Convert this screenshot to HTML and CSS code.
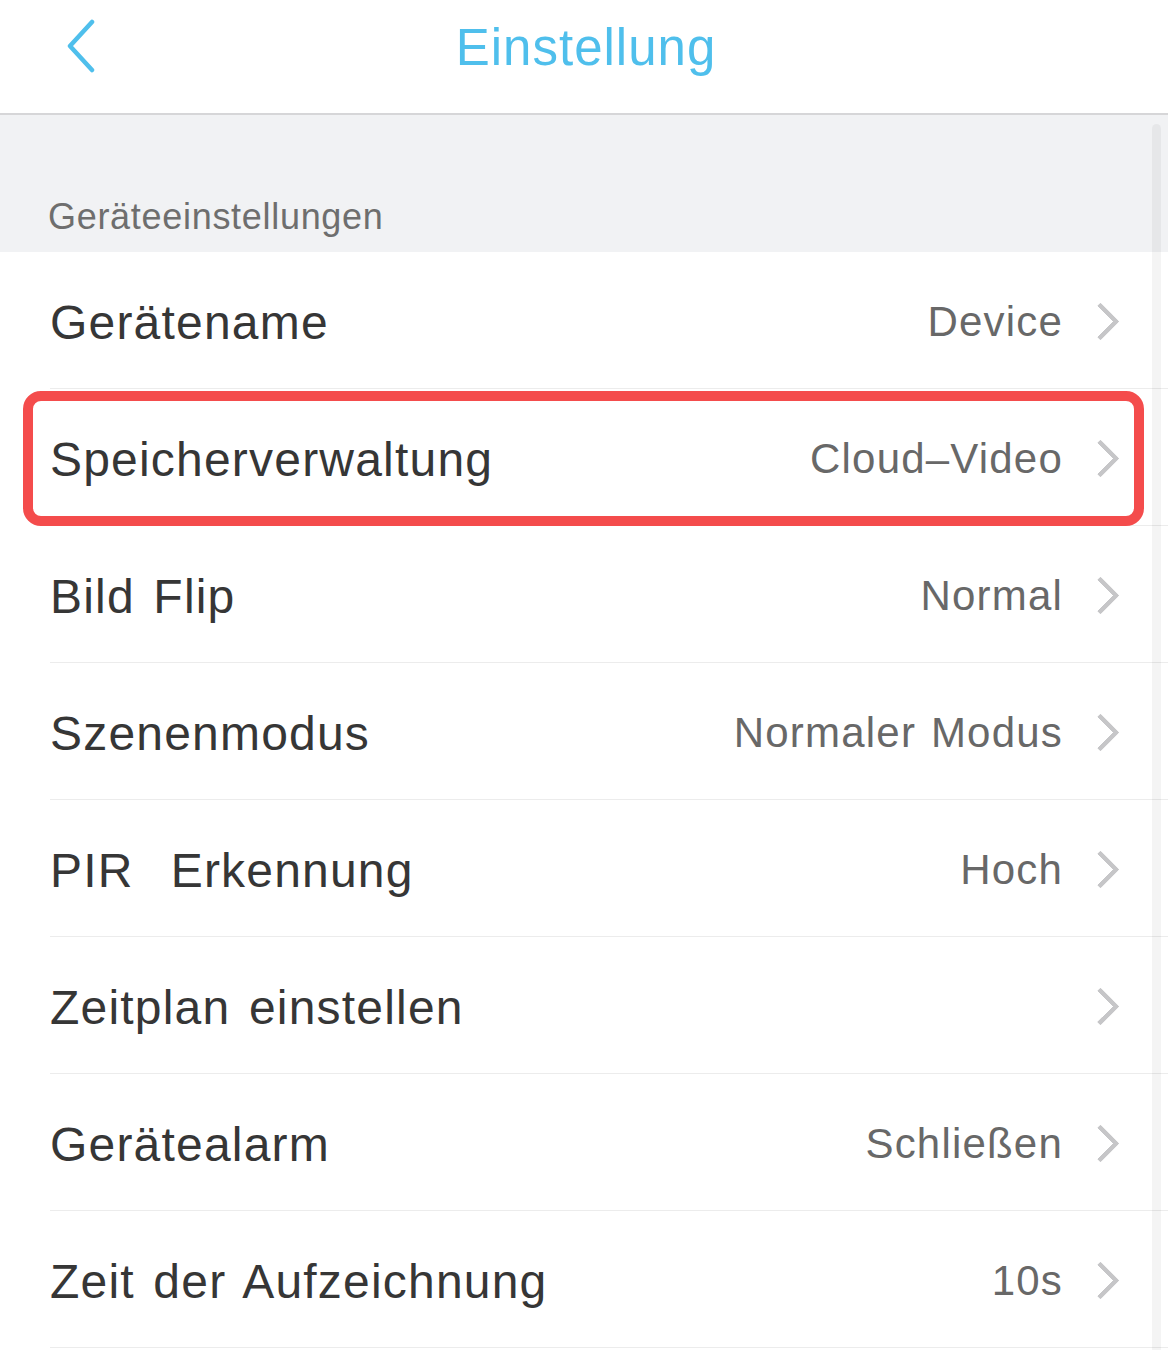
FILE: index.html
```html
<!DOCTYPE html>
<html lang="de">
<head>
<meta charset="utf-8">
<title>Einstellung</title>
<link rel="stylesheet" href="styles.css">
</head>
<body>
<div class="screen">
  <header class="topbar">
    <span class="back">
      <svg width="40" height="60" viewBox="0 0 40 60"><path d="M32 3 L10 27 L32 51" fill="none" stroke="#4fbfec" stroke-width="4.5" stroke-linecap="round" stroke-linejoin="round"/></svg>
    </span>
    <h1 class="title">Einstellung</h1>
  </header>
  <div class="section-head"><span>Geräteeinstellungen</span></div>
  <ul class="list">
    <li class="row"><div class="row-in"><span class="label">Gerätename</span><span class="value">Device</span><span class="chev"></span></div></li>
    <li class="row highlighted"><div class="row-in"><span class="label">Speicherverwaltung</span><span class="value">Cloud–Video</span><span class="chev"></span></div><span class="mark"></span></li>
    <li class="row"><div class="row-in"><span class="label">Bild Flip</span><span class="value">Normal</span><span class="chev"></span></div></li>
    <li class="row"><div class="row-in"><span class="label">Szenenmodus</span><span class="value">Normaler Modus</span><span class="chev"></span></div></li>
    <li class="row"><div class="row-in"><span class="label pre">PIR  Erkennung</span><span class="value">Hoch</span><span class="chev"></span></div></li>
    <li class="row"><div class="row-in"><span class="label">Zeitplan einstellen</span><span class="value"></span><span class="chev"></span></div></li>
    <li class="row"><div class="row-in"><span class="label">Gerätealarm</span><span class="value">Schließen</span><span class="chev"></span></div></li>
    <li class="row"><div class="row-in"><span class="label">Zeit der Aufzeichnung</span><span class="value">10s</span><span class="chev"></span></div></li>
  </ul>
  <div class="scrollbar"></div>
</div>
</body>
</html>
```
FILE: styles.css
```css
* { box-sizing: border-box; }
html, body { margin: 0; padding: 0; background: #ffffff; }
body { font-family: "Liberation Sans", Arial, sans-serif; }

.screen {
  position: relative;
  width: 1168px;
  height: 1350px;
  overflow: hidden;
  background: #ffffff;
}

.topbar {
  position: relative;
  height: 115px;
  display: flex;
  align-items: center;
  justify-content: center;
  border-bottom: 2px solid #d6d6d8;
  background: #ffffff;
}
.back {
  position: absolute;
  left: 60px;
  top: 19px;
  width: 40px;
  height: 60px;
}
.title {
  margin: 0;
  margin-top: -18px;
  margin-left: 4px;
  font-weight: normal;
  font-size: 51px;
  color: #4fbfec;
  letter-spacing: 1px;
}

.section-head {
  height: 137px;
  background: #f1f2f4;
  display: flex;
  align-items: flex-end;
  padding: 0 0 14px 48px;
}
.section-head span {
  font-size: 36px;
  color: #6e6e6e;
  letter-spacing: 0.7px;
}

.list {
  list-style: none;
  margin: 0;
  padding: 0 0 0 50px;
}
.row {
  position: relative;
}
.row-in {
  height: 137px;
  display: flex;
  align-items: center;
  padding: 4px 51px 0 0;
  border-bottom: 1px solid #ececec;
}
.label {
  font-size: 48px;
  color: #363636;
  flex: 1;
  letter-spacing: 1.2px;
  word-spacing: 4px;
}
.label.pre { white-space: pre; }
.value {
  font-size: 42px;
  color: #686868;
  margin-right: 34px;
  letter-spacing: 1.2px;
  word-spacing: 2px;
}
.chev {
  width: 20px;
  height: 36px;
  position: relative;
}
.chev::before {
  content: "";
  position: absolute;
  left: -10px;
  top: 4px;
  width: 22px;
  height: 22px;
  border-top: 5.5px solid #c6c6c8;
  border-right: 5.5px solid #c6c6c8;
  border-radius: 2px;
  transform: rotate(45deg);
}

.mark {
  position: absolute;
  left: -27px;
  top: 2px;
  width: 1121px;
  height: 135px;
  border: 10px solid #f44c4c;
  border-radius: 18px;
  pointer-events: none;
}

.scrollbar {
  position: absolute;
  left: 1152px;
  top: 124px;
  width: 9px;
  height: 1240px;
  border-radius: 5px;
  background: rgba(0, 0, 0, 0.045);
}
```
